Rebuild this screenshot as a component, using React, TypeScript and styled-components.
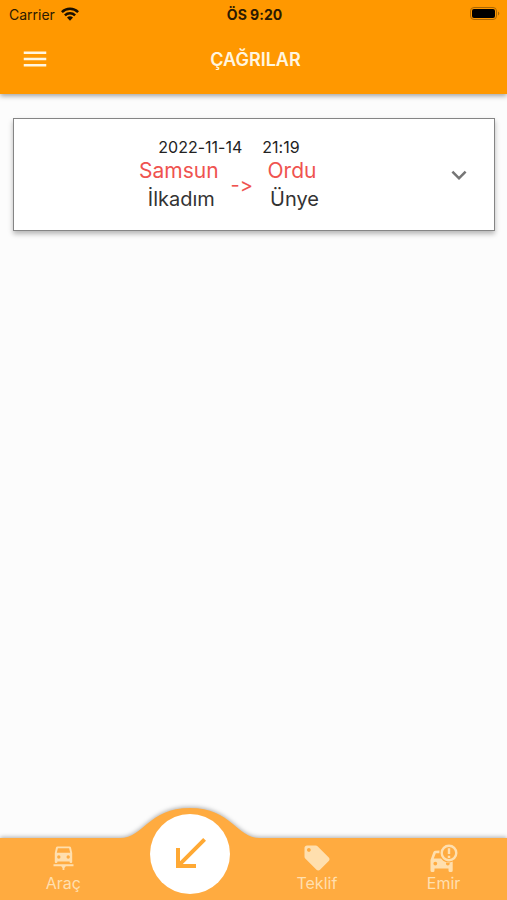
import React from "react";
import styled, { createGlobalStyle } from "styled-components";
import {
  MdCallReceived,
  MdExpandMore,
  MdLocalOffer,
  MdMenu,
} from "react-icons/md";

const GlobalStyle = createGlobalStyle`
  * { box-sizing: border-box; }
  body { margin: 0; background: #fcfcfc; }
  button { border: 0; padding: 0; background: none; font: inherit; color: inherit; cursor: pointer; }
`;

const Screen = styled.div`
  display: flex;
  flex-direction: column;
  min-height: 100vh;
  background: #fcfcfc;
  font-family: Inter, "Noto Sans", sans-serif;
  font-feature-settings: "calt" 0;
`;

const Header = styled.header`
  background: #ff9800;
  box-shadow: 0 2px 5px rgba(0, 0, 0, 0.36);
`;

const StatusBar = styled.div`
  display: grid;
  grid-template-columns: 1fr auto 1fr;
  align-items: center;
  height: 28px;
  padding: 0 7px 0 9px;
  font-size: 14px;
  color: #2b1a02;
`;

const Carrier = styled.div`
  display: flex;
  align-items: center;
  gap: 6px;
`;

const Clock = styled.span`
  font-weight: 700;
`;

const BatteryIcon = styled.svg`
  justify-self: end;
`;

const TitleBar = styled.div`
  display: grid;
  grid-template-columns: 1fr auto 1fr;
  align-items: center;
  height: 66px;
  padding: 0 16px 4px 20px;
  color: #fff6e0;
`;

const IconButton = styled.button`
  display: flex;
  justify-self: start;
`;

const Title = styled.h1`
  margin: 0;
  font-size: 18px;
  font-weight: 600;
`;

const Content = styled.main`
  flex: 1;
  padding: 24px 12px 24px 13px;
`;

const Card = styled.article`
  display: flex;
  align-items: center;
  padding: 16px 20px 16px 0;
  min-height: 113px;
  border: 1px solid #858585;
  background: #fff;
  box-shadow: 0 3px 5px rgba(0, 0, 0, 0.28);
`;

const Details = styled.div`
  flex: 1;
  display: flex;
  flex-direction: column;
  align-items: center;
`;

const Schedule = styled.div`
  display: flex;
  gap: 20px;
  font-size: 16px;
  line-height: 20px;
  color: #222;
`;

const Route = styled.div`
  display: flex;
  align-items: center;
  gap: 12px;
`;

const Place = styled.div`
  display: flex;
  flex-direction: column;
  align-items: center;
  line-height: 28px;
`;

const City = styled.span`
  font-size: 21px;
  color: #ef5350;
`;

const District = styled.span`
  padding-left: 5px;
  font-size: 20px;
  color: #333;
`;

const Arrow = styled.span`
  font-size: 20px;
  color: #ef5350;
`;

const ExpandButton = styled.button`
  display: flex;
  color: #757575;
`;

const Nav = styled.nav`
  display: grid;
  grid-template-columns: repeat(4, 1fr);
  height: 62px;
  background: #ffab40;
  color: #ffdfae;
  filter: drop-shadow(0 -1px 2px rgba(0, 0, 0, 0.3));
`;

const NavButton = styled.button`
  display: flex;
  flex-direction: column;
  align-items: center;
  padding-top: 5px;
  font-size: 16px;
  line-height: 20px;
`;

const ActiveSlot = styled.div`
  position: relative;
`;

const Hump = styled.svg`
  position: absolute;
  left: 50%;
  bottom: 61px;
  transform: translateX(-50%);
`;

const ActiveButton = styled.button`
  position: absolute;
  left: 50%;
  top: -24px;
  transform: translateX(-50%);
  display: flex;
  align-items: center;
  justify-content: center;
  width: 80px;
  height: 80px;
  border-radius: 50%;
  background: #fff;
  color: #ffa934;
`;

function Wifi() {
  return (
    <svg width="18" height="14" viewBox="0 0 18 14" aria-hidden="true">
      <g fill="none" stroke="#1a1000" strokeWidth="2.5">
        <path d="M0.9 5.1a11.5 11.5 0 0 1 16.2 0" />
        <path d="M3.9 8.3a7.3 7.3 0 0 1 10.2 0" />
      </g>
      <path d="M9 13.7l-3-3.1a4.3 4.3 0 0 1 6 0z" fill="#1a1000" />
    </svg>
  );
}

function Battery() {
  return (
    <BatteryIcon width="30" height="14" viewBox="0 0 30 14" role="img" aria-label="Battery">
      <rect x="0.5" y="0.5" width="26" height="12" rx="3.5" fill="none" stroke="#a96705" />
      <rect x="2" y="2" width="23" height="9" rx="2" fill="#000" />
      <path d="M28 4.5a2.2 2.2 0 0 1 0 4z" fill="#a96705" />
    </BatteryIcon>
  );
}

function CarLift() {
  return (
    <svg width="30" height="30" viewBox="0 0 30 30" aria-hidden="true">
      <path
        fill="currentColor"
        fillRule="evenodd"
        d="M9.500 3.500H21.500Q22.600 3.500 23 4.500L24.200 10V19Q24.200 20 23.200 20H22.600Q21.600 20 21.600 19V18.400H9.400V19Q9.400 20 8.400 20H7.800Q6.800 20 6.800 19V10L8 4.500Q8.400 3.500 9.500 3.500ZM9.900 5.300L8.800 9.800H22.200L21.100 5.300ZM10.800 12.300a1.700 1.700 0 1 0 0 3.400a1.700 1.700 0 1 0 0-3.400ZM20.200 12.300a1.700 1.700 0 1 0 0 3.400a1.700 1.700 0 1 0 0-3.400Z"
      />
      <path fill="currentColor" d="M5.500 21.200H25.500V23.200H17.800L16.400 25V27H14.600V25L13.200 23.200H5.500Z" />
    </svg>
  );
}

function CarAlert() {
  return (
    <svg width="30" height="30" viewBox="0 0 30 30" aria-hidden="true">
      <path
        fill="currentColor"
        fillRule="evenodd"
        d="M10.500 7.500L6 7.800Q4.800 8 4.300 9.200L1.500 17V27.500Q1.500 29 3 29H4.200Q5.500 29 5.500 27.500V25.500H19.500V27.500Q19.500 29 21 29H22.200Q23.700 29 23.700 27.500V18.500A9 9 0 0 1 12 15.500H4.800L6.800 10.200H10.400ZM6.300 18.700a1.900 1.900 0 1 1 0 3.800a1.900 1.900 0 1 1 0-3.800ZM18.800 18.700a1.900 1.900 0 1 1 0 3.800a1.900 1.900 0 1 1 0-3.800Z"
      />
      <circle cx="20" cy="10" r="7.300" fill="none" stroke="currentColor" strokeWidth="2.400" />
      <path d="M20 5.200v5.800M20 12.800v2.200" stroke="currentColor" strokeWidth="2.400" />
    </svg>
  );
}

const stops = [
  { city: "Samsun", district: "İlkadım" },
  { city: "Ordu", district: "Ünye" },
];

export default function App() {
  return (
    <Screen>
      <GlobalStyle />
      <Header>
        <StatusBar>
          <Carrier>
            Carrier
            <Wifi />
          </Carrier>
          <Clock>ÖS 9:20</Clock>
          <Battery />
        </StatusBar>
        <TitleBar>
          <IconButton aria-label="Menü">
            <MdMenu size={30} />
          </IconButton>
          <Title>ÇAĞRILAR</Title>
        </TitleBar>
      </Header>
      <Content>
        <Card>
          <Details>
            <Schedule>
              <span>2022-11-14</span>
              <span>21:19</span>
            </Schedule>
            <Route>
              <Place>
                <City>{stops[0].city}</City>
                <District>{stops[0].district}</District>
              </Place>
              <Arrow>-&gt;</Arrow>
              <Place>
                <City>{stops[1].city}</City>
                <District>{stops[1].district}</District>
              </Place>
            </Route>
          </Details>
          <ExpandButton aria-label="Detaylar">
            <MdExpandMore size={30} />
          </ExpandButton>
        </Card>
      </Content>
      <Nav>
        <NavButton>
          <CarLift />
          Araç
        </NavButton>
        <ActiveSlot>
          <Hump width="140" height="31" viewBox="0 0 140 31" aria-hidden="true">
            <path d="M0 31V30C24 30 28 0 70 0S116 30 140 30V31z" fill="#ffab40" />
          </Hump>
          <ActiveButton aria-label="Çağrılar">
            <MdCallReceived size={48} />
          </ActiveButton>
        </ActiveSlot>
        <NavButton>
          <MdLocalOffer size={30} />
          Teklif
        </NavButton>
        <NavButton>
          <CarAlert />
          Emir
        </NavButton>
      </Nav>
    </Screen>
  );
}
